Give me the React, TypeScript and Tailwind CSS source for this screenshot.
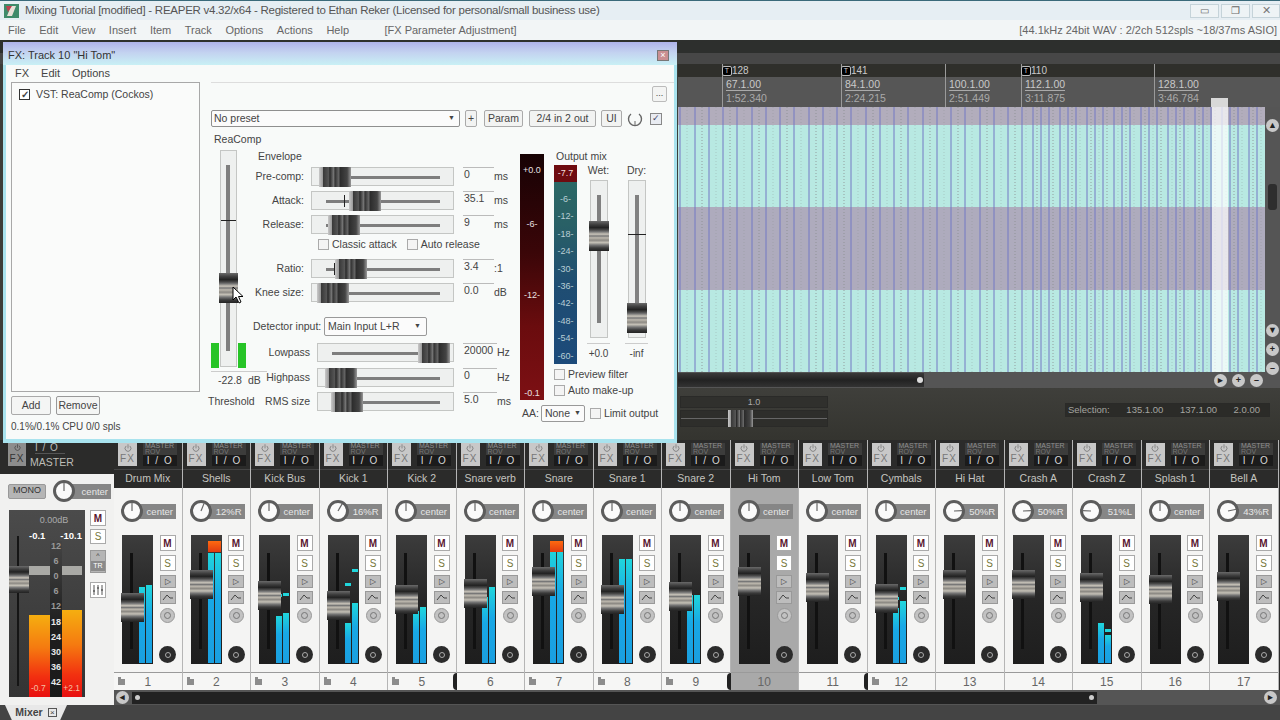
import React from "react";
import { Power } from "lucide-react";

const HCAP = "bg-[linear-gradient(90deg,#c9c9c9_0%,#9a9a9a_12%,#3a3a3a_14%,#555_30%,#2a2a2a_34%,#777_46%,#333_50%,#666_62%,#2c2c2c_66%,#444_88%,#999_100%)]";
const VCAP = "bg-[linear-gradient(180deg,#6a6a6a_0%,#3e3e3e_12%,#222_22%,#4a4a4a_30%,#777_36%,#c9c4ba_44%,#777_50%,#bdb8ae_56%,#8d8a84_64%,#c4c0b6_72%,#777_80%,#3a3a3a_90%,#222_100%)]";

function HSlider({ w, thumb, tick }: { w: number; thumb: number; tick?: number }) {
  return (
    <div className="relative h-[19px] shrink-0 border border-[#c4c6c4] bg-[#eef0ef]" style={{ width: w }}>
      <div className="absolute left-[14px] right-[13px] top-[8px] h-[3px] bg-[#7d7d7d]" />
      {tick !== undefined && <div className="absolute top-[3px] h-[12px] w-px bg-[#222]" style={{ left: tick }} />}
      <div className={`absolute -top-px h-[20px] w-[32px] ${HCAP}`} style={{ left: thumb }} />
    </div>
  );
}

function Row({ label, lw, sw, thumb, tick, val, unit, vw = 31 }: { label: string; lw: number; sw: number; thumb: number; tick?: number; val: string; unit: string; vw?: number }) {
  return (
    <div className="flex h-[19px] items-center">
      <div className="shrink-0 text-right" style={{ width: lw }}>{label}</div>
      <div className="shrink-0" style={{ width: 7 }} />
      <HSlider w={sw} thumb={thumb} tick={tick} />
      <div className="ml-[9px] h-[19px] shrink-0 border-t border-[#bbb] pl-px text-[10.5px] leading-[13px]" style={{ width: vw }}>{val}</div>
      <div className="whitespace-nowrap">{unit}</div>
    </div>
  );
}

function Check({ label, on }: { label: string; on?: boolean }) {
  return (
    <div className="flex items-center gap-[3px] whitespace-nowrap">
      <div className="flex h-[11px] w-[11px] items-center justify-center border border-[#aaa] bg-[#f4f4f4] text-[9px] leading-none">{on ? "✓" : ""}</div>
      <span>{label}</span>
    </div>
  );
}

function Btn({ children, w }: { children: React.ReactNode; w: number }) {
  return (
    <div className="flex h-[17px] shrink-0 items-center justify-center rounded-[2px] border border-[#aaa] bg-[#f2f3f2]" style={{ width: w }}>
      {children}
    </div>
  );
}

function VSlider({ cap, tick, h = 158 }: { cap: number; tick?: number; h?: number }) {
  return (
    <div className="relative mx-auto w-[18px] border border-[#c4c6c4] bg-[#eef0ef]" style={{ height: h }}>
      <div className="absolute bottom-[14px] left-[6px] top-[14px] w-[4px] bg-[#808080]" />
      {tick !== undefined && <div className="absolute -left-px h-px w-[18px] bg-[#222]" style={{ top: tick }} />}
      <div className={`absolute -left-[2px] h-[30px] w-[20px] ${VCAP}`} style={{ top: cap }} />
    </div>
  );
}

function FxWindow() {
  return (
    <div className="absolute left-[3px] top-[42px] flex h-[401px] w-[674px] flex-col bg-[#a9e3ee] text-[10.5px] text-[#444]">
      <div className="flex h-[23px] shrink-0 items-center justify-between bg-[linear-gradient(180deg,#aeb2ea_0%,#c3d2f0_45%,#c9f0f5_100%)] pl-[5px] pr-[8px] pt-[3px] text-[11px] text-[#333]">
        <span>FX: Track 10 "Hi Tom"</span>
        <div className="flex h-[11px] w-[12px] items-center justify-center border border-[#777] bg-[#c98f92] text-[9px] leading-none text-white">×</div>
      </div>
      <div className="mx-[3px] mb-[4px] flex flex-1 flex-col bg-[#f8faf9]">
        <div className="flex h-[17px] shrink-0 items-center gap-[12px] pl-[9px] text-[11px]">
          <span>FX</span><span>Edit</span><span>Options</span>
        </div>
        <div className="flex flex-1">
          <div className="ml-[5px] flex w-[189px] shrink-0 flex-col">
            <div className="h-[310px] border border-[#a8a8a8] bg-[#fafbfa] pl-[7px] pt-[4px]">
              <div className="flex items-center gap-[6px] text-[10.5px]">
                <div className="flex h-[11px] w-[11px] items-center justify-center border border-[#333] bg-white text-[10px] font-bold leading-none">✓</div>
                <span>VST: ReaComp (Cockos)</span>
              </div>
            </div>
            <div className="mt-[4px] flex gap-[5px]">
              <div className="flex h-[19px] w-[40px] items-center justify-center rounded-[2px] border border-[#aaa] bg-[#f4f5f4]">Add</div>
              <div className="flex h-[19px] w-[44px] items-center justify-center rounded-[2px] border border-[#999] bg-[#f4f5f4]">Remove</div>
            </div>
            <div className="mt-[4px] text-[10px]">0.1%/0.1% CPU 0/0 spls</div>
          </div>
          <div className="ml-[11px] flex min-w-0 flex-1 flex-col">
            <div className="relative flex h-[28px] shrink-0 justify-end border-t border-[#ddd] pr-[7px] pt-[3px]">
              <div className="flex h-[16px] w-[15px] items-center justify-center rounded-[2px] border border-[#bbb] bg-[#f3f4f3] text-[9px]">...</div>
            </div>
            <div className="flex h-[17px] shrink-0 items-center">
              <div className="flex h-[17px] w-[249px] items-center justify-between rounded-[2px] border border-[#8f8f8f] bg-[#fbfbfb] px-[2px] pr-[4px]">
                <span>No preset</span><span className="text-[7px]">▼</span>
              </div>
              <div className="ml-[5px]"><Btn w={12}>+</Btn></div>
              <div className="ml-[7px]"><Btn w={39}>Param</Btn></div>
              <div className="ml-[6px]"><Btn w={67}>2/4 in 2 out</Btn></div>
              <div className="ml-[5px]"><Btn w={21}>UI</Btn></div>
              <svg width="16" height="16" viewBox="0 0 16 16" className="ml-[5px]"><path d="M4 3 A6.5 6.5 0 1 0 12 3" fill="none" stroke="#666" strokeWidth="1.4" /><path d="M8 14 L8 10" stroke="#666" /></svg>
              <div className="ml-[7px] flex h-[12px] w-[12px] items-center justify-center border border-[#888] bg-[#e9ecf2] text-[9px] leading-none text-[#446]">✓</div>
            </div>
            <div className="h-[23px] shrink-0 pl-[3px] pt-[6px] leading-[13px]">ReaComp</div>
            <div className="flex min-h-0 flex-1">
              {/* threshold */}
              <div className="w-[39px] shrink-0">
                <div className="relative ml-[9px] h-[217px] w-[17px] border border-[#c4c6c4] bg-[#eef0ef]">
                  <div className="absolute left-[5px] top-[14px] h-[186px] w-[4px] bg-[#7f7f7f]" />
                  <div className="absolute left-0 top-[69px] h-px w-[15px] bg-[#222]" />
                  <div className="absolute -left-[10px] top-[192px] h-[25px] w-[8px] bg-[#27c427]" />
                  <div className="absolute -right-[10px] top-[192px] h-[25px] w-[8px] bg-[#27c427]" />
                  <div className={`absolute -left-[2px] top-[122px] h-[30px] w-[19px] ${VCAP}`} />
                  <svg width="14" height="19" viewBox="0 0 14 19" className="absolute left-[11px] top-[135px]">
                    <path d="M1 1 L1 14 L4 11 L7 17 L9 16 L6.5 10.5 L11 10.5 Z" fill="#fff" stroke="#000" strokeWidth="1" />
                  </svg>
                </div>
                <div className="relative mt-[4px] h-[14px] w-[56px] whitespace-nowrap border-t border-[#ccc] pl-[7px] pt-px leading-[14px]">-22.8<span className="ml-[6px]">dB</span></div>
                <div className="-ml-[3px] mt-[10px] leading-[13px]">Threshold</div>
              </div>
              {/* sliders */}
              <div className="w-[270px] shrink-0 pt-[17px]">
                <div className="relative -mt-[17px] h-[17px] pl-[8px] leading-[12px]">Envelope</div>
                <Row label="Pre-comp:" lw={54} sw={143} thumb={7} val="0" unit="ms" />
                <div className="mt-[5px]"><Row label="Attack:" lw={54} sw={143} thumb={37} tick={32} val="35.1" unit="ms" /></div>
                <div className="mt-[5px]"><Row label="Release:" lw={54} sw={143} thumb={16} val="9" unit="ms" /></div>
                <div className="ml-[68px] mt-[4px] flex h-[13px] gap-[10px]"><Check label="Classic attack" /><Check label="Auto release" /></div>
                <div className="mt-[8px]"><Row label="Ratio:" lw={54} sw={143} thumb={23} tick={22} val="3.4" unit=":1" /></div>
                <div className="mt-[5px]"><Row label="Knee size:" lw={54} sw={143} thumb={5} val="0.0" unit="dB" /></div>
                <div className="mt-[15px] flex h-[19px] items-center">
                  <span className="ml-[3px] w-[71px] whitespace-nowrap">Detector input:</span>
                  <div className="flex h-[19px] w-[103px] items-center justify-between rounded-[2px] border border-[#999] bg-[#fbfbfb] pl-[3px] pr-[5px]"><span>Main Input L+R</span><span className="text-[7px]">▼</span></div>
                </div>
                <div className="mt-[7px]"><Row label="Lowpass" lw={60} sw={137} thumb={100} val="20000" unit="Hz" vw={34} /></div>
                <div className="mt-[6px]"><Row label="Highpass" lw={60} sw={137} thumb={7} val="0" unit="Hz" vw={34} /></div>
                <div className="mt-[5px]"><Row label="RMS size" lw={60} sw={137} thumb={13} val="5.0" unit="ms" vw={34} /></div>
              </div>
              {/* meters + output */}
              <div className="flex w-[150px] shrink-0 flex-col">
                <div className="flex h-[250px]">
                  <div className="relative mt-[4px] h-[246px] w-[24px] shrink-0 bg-[linear-gradient(180deg,#170204_0%,#3a0608_40%,#6a0c0e_70%,#7d1014_100%)] text-center text-[9px] text-[#e8e0e0]">
                    <div className="absolute inset-x-0 top-[10px]">+0.0</div>
                    <div className="absolute inset-x-0 top-[64px]">-6-</div>
                    <div className="absolute inset-x-0 top-[135px]">-12-</div>
                    <div className="absolute inset-x-0 bottom-0">-0.1</div>
                  </div>
                  <div className="ml-[10px] flex-1">
                    <div className="h-[15px] pl-[2px] leading-[12px]">Output mix</div>
                    <div className="flex">
                      <div className="flex h-[199px] w-[23px] shrink-0 flex-col bg-[linear-gradient(180deg,#2d6b66_0%,#296066_30%,#1f4d72_60%,#1c4a7a_100%)] text-center text-[9px] leading-[17.4px] text-[#b8ced4]">
                        <div className="mb-[9px] h-[17px] bg-[#6e0b10] text-[#f3dede]">-7.7</div>
                        {["-6-", "-12-", "-18-", "-24-", "-30-", "-36-", "-42-", "-48-", "-54-", "-60-"].map((t) => <div key={t}>{t}</div>)}
                      </div>
                      <div className="ml-[10px] w-[23px] shrink-0 text-center">
                        <div className="h-[15px] leading-[10px]">Wet:</div>
                        <VSlider cap={40} />
                        <div className="mt-[5px] border-t border-[#ccc] pt-[2px] text-[10px]">+0.0</div>
                      </div>
                      <div className="ml-[15px] w-[23px] shrink-0 text-center">
                        <div className="h-[15px] leading-[10px]">Dry:</div>
                        <VSlider cap={122} tick={53} />
                        <div className="mt-[5px] border-t border-[#ccc] pt-[2px] text-[10px]">-inf</div>
                      </div>
                    </div>
                  </div>
                </div>
                <div className="relative h-[0px]">
                  <div className="absolute left-[34px] top-[-33px]"><Check label="Preview filter" /></div>
                  <div className="absolute left-[34px] top-[-17px]"><Check label="Auto make-up" /></div>
                </div>
                <div className="mt-[5px] flex items-center">
                  <span className="ml-[2px]">AA:</span>
                  <div className="ml-[2px] flex h-[17px] w-[44px] items-center justify-between rounded-[2px] border border-[#999] bg-[#fbfbfb] px-[3px]"><span>None</span><span className="text-[7px]">▼</span></div>
                  <div className="ml-[5px]"><Check label="Limit output" /></div>
                </div>
              </div>
            </div>
          </div>
        </div>
      </div>
    </div>
  );
}

const MARKS = [
  { x: 722, t: "128", a: "67.1.00", b: "1:52.340" },
  { x: 841, t: "141", a: "84.1.00", b: "2:24.215" },
  { x: 945, t: "", a: "100.1.00", b: "2:51.449" },
  { x: 1021, t: "110", a: "112.1.00", b: "3:11.875" },
  { x: 1154, t: "", a: "128.1.00", b: "3:46.784" },
];

function LaneLines() {
  const lines: React.ReactNode[] = [];
  let x = 2;
  let i = 0;
  while (x < 587) {
    const dense = x > 330;
    lines.push(<line key={`p${i}`} x1={x} x2={x} y1={0} y2={267} stroke="#7378c4" strokeWidth="1" />);
    const dx = x + (dense ? 4 : 7);
    lines.push(<line key={`d${i}`} x1={dx} x2={dx} y1={0} y2={267} stroke="#8a8f8f" strokeWidth="1" strokeDasharray="1 2" opacity={i % 2 ? 0.8 : 0.35} />);
    x += dense ? (i % 3 === 0 ? 11 : 8) : 14 + (i % 4 === 0 ? 1 : 0);
    i++;
  }
  return (
    <svg className="absolute inset-0" width="587" height="267" viewBox="0 0 587 267">
      {lines}
    </svg>
  );
}

function RoundBtn({ c }: { c: string }) {
  return <div className="flex h-[13px] w-[13px] items-center justify-center rounded-full bg-[#c8c8c8] text-[9px] font-bold leading-none text-[#222]">{c}</div>;
}

function Arrange() {
  return (
    <div className="flex h-[400px] shrink-0 flex-col bg-[#3d3d39]">
      <div className="h-[13px] shrink-0 bg-[#2d2f2d]" />
      <div className="h-[11px] shrink-0 bg-[#474747]" />
      <div className="flex min-h-0 flex-1">
        <div className="w-[678px] shrink-0" />
        <div className="flex min-w-0 flex-1 flex-col">
          <div className="relative h-[43px] shrink-0 bg-[linear-gradient(180deg,#2f2f2b_0%,#2f2f2b_30%,#565656_30%,#565656_100%)]">
            {MARKS.map((m) => (
              <div key={m.x} className="absolute top-0 h-[43px] border-l border-[#9a9a9a] pl-[3px] text-[10.5px] leading-[12px] text-[#c9c9c9]" style={{ left: m.x - 678 }}>
                <div className="flex h-[13px] items-center">
                  {m.t && <span className="-ml-[4px] flex h-[10px] w-[10px] items-center justify-center rounded-[2px] border border-[#bbb] bg-black text-[7px] leading-none">T</span>}
                  <span className="text-[10px]">{m.t}</span>
                </div>
                <div className="w-fit border-b border-[#aaa] pt-px">{m.a}</div>
                <div className="pt-px text-[#aaa]">{m.b}</div>
              </div>
            ))}
            <div className="absolute left-[533px] top-[34px] h-[9px] w-[17px] bg-[#d8d8d8]" />
          </div>
          <div className="flex min-h-0">
            <div className="relative h-[265px] w-[587px] shrink-0 overflow-hidden">
              <div className="h-[18px] bg-[#b2adbc]" />
              <div className="h-[82px] bg-[#b8e9e2]" />
              <div className="h-[83px] bg-[#aeabbd]" />
              <div className="h-[82px] bg-[#b8e9e2]" />
              <LaneLines />
              <div className="absolute bottom-0 left-[534px] top-0 w-[16px] bg-white/70" />
            </div>
            <div className="relative flex h-[265px] flex-1 flex-col items-center bg-[#555]">
              <div className="mt-[12px]"><RoundBtn c="▲" /></div>
              <div className="mt-[52px] h-[26px] w-[9px] rounded-[3px] bg-[#2e2e2e]" />
              <div className="-mb-[3px] mt-auto flex flex-col gap-[6px]"><RoundBtn c="▼" /><RoundBtn c="+" /><RoundBtn c="–" /></div>
            </div>
          </div>
          <div className="flex h-[16px] shrink-0 items-center bg-[#555]">
            <div className="flex h-[14px] w-[246px] items-center justify-end bg-[linear-gradient(180deg,#3a3a3a,#222_50%,#333)] pr-[1px]"><div className="h-[6px] w-[6px] rounded-full bg-[#ddd]" /></div>
            <div className="ml-[290px] flex gap-[5px]"><RoundBtn c="▸" /><RoundBtn c="+" /><RoundBtn c="–" /></div>
          </div>
          <div className="flex min-h-0 flex-1 bg-[linear-gradient(180deg,#3f3f3b,#34342f)]">
            <div className="ml-[2px] mt-[8px] w-[148px]">
              <div className="h-[12px] border border-[#2a2a28] bg-[#30302d] text-center text-[9px] leading-[10px] text-[#aaa]">1.0</div>
              <div className="relative mt-[2px] h-[17px] border border-[#2a2a28] bg-[#2e2e2b]">
                <div className="absolute inset-x-0 top-[7px] h-px bg-[#666]" />
                <div className={`absolute left-[47px] -top-px h-[17px] w-[25px] ${HCAP}`} />
              </div>
            </div>
            <div className="ml-auto mr-[10px] mt-[15px] flex h-[14px] w-[205px] items-center justify-between border border-[#2a2a28] bg-[#2b2b28] px-[2px] text-[9.5px] text-[#a5a5a0]">
              <span>Selection:</span><span>135.1.00</span><span>137.1.00</span><span className="pr-[7px]">2.0.00</span>
            </div>
          </div>
        </div>
      </div>
    </div>
  );
}

type Ch = { n: number; name: string; pan: string; a: number; cap: number; l: number; r: number; peakL?: number; peakR?: number; red?: boolean; folder?: boolean; end?: boolean; sel?: boolean };

const CH: Ch[] = [
  { n: 1, name: "Drum Mix", pan: "center", a: 0, cap: 58, l: 76, r: 78, folder: true },
  { n: 2, name: "Shells", pan: "12%R", a: 22, cap: 35, l: 110, r: 110, red: true, folder: true },
  { n: 3, name: "Kick Bus", pan: "center", a: 0, cap: 46, l: 47, r: 50, peakL: 67, peakR: 68, folder: true },
  { n: 4, name: "Kick 1", pan: "16%R", a: 30, cap: 56, l: 40, r: 60, peakL: 78, peakR: 92, folder: true },
  { n: 5, name: "Kick 2", pan: "center", a: 0, cap: 50, l: 52, r: 56, folder: true, end: true },
  { n: 6, name: "Snare verb", pan: "center", a: 0, cap: 44, l: 66, r: 76 },
  { n: 7, name: "Snare", pan: "center", a: 0, cap: 32, l: 114, r: 114, red: true, folder: true },
  { n: 8, name: "Snare 1", pan: "center", a: 0, cap: 50, l: 104, r: 104, folder: true },
  { n: 9, name: "Snare 2", pan: "center", a: 0, cap: 47, l: 68, r: 68, folder: true, end: true },
  { n: 10, name: "Hi Tom", pan: "center", a: 0, cap: 32, l: 0, r: 0, sel: true },
  { n: 11, name: "Low Tom", pan: "center", a: 0, cap: 38, l: 0, r: 0, end: true },
  { n: 12, name: "Cymbals", pan: "center", a: 0, cap: 49, l: 55, r: 62, peakL: 64, peakR: 74, folder: true },
  { n: 13, name: "Hi Hat", pan: "50%R", a: 88, cap: 35, l: 0, r: 0 },
  { n: 14, name: "Crash A", pan: "50%R", a: 88, cap: 35, l: 0, r: 0 },
  { n: 15, name: "Crash Z", pan: "51%L", a: -88, cap: 38, l: 40, r: 28, peakR: 32 },
  { n: 16, name: "Splash 1", pan: "center", a: 0, cap: 40, l: 0, r: 0 },
  { n: 17, name: "Bell A", pan: "43%R", a: 78, cap: 37, l: 0, r: 0 },
];

function Knob({ a, size = 22 }: { a: number; size?: number }) {
  const r = (a * Math.PI) / 180;
  return (
    <svg width={size} height={size} viewBox="0 0 22 22" className="relative z-10 shrink-0">
      <circle cx="11" cy="11" r="9.5" fill="#fafafa" stroke="#5c5c5c" strokeWidth="3" />
      <line x1="11" y1="11" x2={11 + 8.5 * Math.sin(r)} y2={11 - 8.5 * Math.cos(r)} stroke="#666" strokeWidth="1.2" />
    </svg>
  );
}

function Pan({ pan, a }: { pan: string; a: number }) {
  return (
    <div className="flex items-center">
      <Knob a={a} />
      <div className="-ml-[6px] h-[15px] w-[39px] bg-[#868686] pr-[3px] text-right text-[9.5px] leading-[15px] text-[#e6e6e6]">{pan}</div>
    </div>
  );
}

function ChannelHeader({ name }: { name: string }) {
  return (
    <div className="h-[48px] shrink-0 bg-[#2b2b2a]">
      <div className="flex h-[29px] gap-[6px] px-[4px] pt-[3px]">
        <div className="flex h-[23px] w-[19px] shrink-0 flex-col items-center bg-[#c8c8c8] text-[#666]">
          <Power size={8} strokeWidth={2} className="mt-[1px]" />
          <span className="mt-[1px] text-[10px] leading-[11px] tracking-[1px] text-[#777]">FX</span>
        </div>
        <div className="flex h-[23px] w-[34px] shrink-0 flex-col bg-[#3c3c3b]">
          <span className="pl-[2px] text-[7px] leading-[6px] text-[#8f8f8f]">MASTER</span>
          <span className="pl-[2px] text-[7px] leading-[6px] text-[#777]">ROV</span>
          <span className="mt-auto w-full bg-[#1b1b1b] text-center text-[10px] leading-[11px] tracking-[1.5px] text-[#d8d8d8]">I / O</span>
        </div>
      </div>
      <div className="flex h-[19px] items-center justify-center border-t border-[#444] text-[10.5px] text-[#c5c5c0]">{name}</div>
    </div>
  );
}

function Channel({ c }: { c: Ch }) {
  const barTop = c.red ? "bg-[linear-gradient(180deg,#ff6a10,#e03a10)]" : "";
  return (
    <div className="flex w-[68.5px] shrink-0 flex-col border-r border-[#b5b5b5]">
      <ChannelHeader name={c.name} />
      <div className={`flex flex-1 flex-col pl-[7px] pt-[12px] ${c.sel ? "bg-[#a9a9a9]" : "bg-[#f4f4f3]"}`}>
        <Pan pan={c.pan} a={c.a} />
        <div className="mt-[13px] flex">
          <div className="relative ml-px h-[129px] w-[31px] shrink-0 bg-[linear-gradient(180deg,#3c3c3c,#262626_50%,#1e1e1e)]">
            <div className="absolute left-[8px] top-[18px] h-[96px] w-[3px] bg-[#111]" />
            {c.l > 0 && <div className="absolute bottom-[1px] left-[17px] w-[6px] bg-[linear-gradient(0deg,#1a9fe0,#18a8e6_60%,#20d6dc)]" style={{ height: c.l }} />}
            {c.r > 0 && <div className="absolute bottom-[1px] left-[24px] w-[6px] bg-[linear-gradient(0deg,#1a9fe0,#18a8e6_60%,#20d6dc)]" style={{ height: c.r }} />}
            {c.red && <div className={`absolute left-[17px] top-[6px] h-[11px] w-[13px] ${barTop}`} />}
            {c.peakL !== undefined && <div className="absolute left-[17px] h-[3px] w-[6px] bg-[#20d6dc]" style={{ bottom: c.peakL }} />}
            {c.peakR !== undefined && <div className="absolute left-[24px] h-[3px] w-[6px] bg-[#20d6dc]" style={{ bottom: c.peakR }} />}
            <div className={`absolute -left-px h-[29px] w-[23px] ${VCAP}`} style={{ top: c.cap }} />
          </div>
          <div className="ml-[6px] flex h-[129px] w-[17px] shrink-0 flex-col items-center">
            <div className="flex h-[16px] w-[16px] items-center justify-center border border-[#aaa] bg-white text-[10px] font-bold text-[#5a1530]">M</div>
            <div className="mt-[4px] flex h-[16px] w-[16px] items-center justify-center border border-[#aaa] bg-white text-[10px] text-[#77773a]">S</div>
            <div className="mt-[4px] flex h-[13px] w-[16px] items-center justify-center border border-[#999] bg-[#bdbdbd] text-[8px] leading-none text-[#444]">▷</div>
            <div className="mt-[3px] flex h-[13px] w-[16px] items-center justify-center border border-[#999] bg-[#bdbdbd]">
              <svg width="12" height="9" viewBox="0 0 12 9"><path d="M1 7 L5 2 L8 5 L11 5" fill="none" stroke="#444" strokeWidth="1" /></svg>
            </div>
            <div className="mt-[4px] flex h-[15px] w-[15px] items-center justify-center rounded-full border border-[#999] bg-[#c2c2c2]">
              <div className="h-[7px] w-[7px] rounded-full border border-[#777]" />
            </div>
            <div className="mb-px mt-auto flex h-[17px] w-[17px] items-center justify-center rounded-full bg-[#2b2b2b]">
              <div className="h-[6px] w-[6px] rounded-full border border-[#aaa]" />
            </div>
          </div>
        </div>
        <div className="flex-1" />
      </div>
      <div className={`relative flex h-[18px] shrink-0 items-center justify-center border-t border-[#9a9a9a] text-[12px] text-[#666] ${c.sel ? "bg-[#a9a9a9]" : "bg-[#f6f6f5]"}`}>
        {c.folder && (
          <svg width="9" height="10" viewBox="0 0 9 10" className="absolute left-[3px] top-[3px]"><path d="M1 1 H4 V3 H8 V9 H1 Z" fill="#8c8c8c" /></svg>
        )}
        <span>{c.n}</span>
        {c.end && <div className="absolute -right-px top-0 h-[17px] w-[4px] rounded-l-full bg-[#222]" />}
      </div>
    </div>
  );
}

function Master() {
  const scale = ["12", "6", "0", "6", "12", "18", "24", "30", "36", "42"];
  return (
    <div className="flex w-[114px] shrink-0 flex-col">
      <div className="flex h-[34px] shrink-0 bg-[#2b2b2a] pl-[8px] pt-[3px]">
        <div className="flex h-[23px] w-[18px] flex-col items-center bg-[#8d8d8d] text-[#333]">
          <Power size={7} strokeWidth={2} className="mt-[1px]" />
          <span className="mt-[2px] text-[10px] leading-[12px] tracking-[1px]">FX</span>
        </div>
        <div className="ml-[4px] flex flex-col">
          <span className="ml-[5px] w-fit border-b border-[#555] pr-[6px] text-[10px] leading-[10px] tracking-[1px] text-[#bbb]">I / O</span>
          <span className="mt-[2px] text-[10.5px] leading-[13px] text-[#bdbdb8]">MASTER</span>
        </div>
      </div>
      <div className="flex-1 bg-[#f1f1f0] pl-[8px] pt-[7px]">
        <div className="flex h-[20px] items-center">
          <div className="flex h-[15px] w-[38px] items-center justify-center rounded-[2px] border border-[#999] bg-[#b5b5b5] text-[9px] text-[#333]">MONO</div>
          <div className="ml-[7px] flex items-center">
            <Knob a={0} />
            <div className="-ml-[6px] h-[15px] w-[42px] bg-[#868686] pr-[3px] text-right text-[9.5px] leading-[15px] text-[#e6e6e6]">center</div>
          </div>
        </div>
        <div className="mt-[9px] flex">
          <div className="relative ml-px h-[187px] w-[76px] shrink-0 bg-[linear-gradient(180deg,#4b4b4b,#343434)] text-[#ddd]">
            <div className="absolute inset-x-0 top-[4px] ml-[14px] text-center text-[9px] text-[#aaa]">0.00dB</div>
            <div className="absolute left-[20px] right-0 top-[19px] flex justify-between pr-[3px] text-[9.5px] font-bold text-white"><span>-0.1</span><span>-10.1</span></div>
            <div className="absolute left-[8px] top-[26px] h-[150px] w-[2px] bg-[#151515]" />
            <div className="absolute left-[20px] top-[56px] h-[9px] w-[53px] bg-[#a9a9a5]" />
            <div className={`absolute left-0 top-[56px] h-[27px] w-[20px] ${VCAP}`} />
            <div className="absolute bottom-0 left-[20px] top-[105px] w-[21px] bg-[linear-gradient(180deg,#f5ae10,#f57a10_40%,#f23010_75%,#e81010)]" />
            <div className="absolute bottom-0 right-[3px] top-[100px] w-[20px] bg-[linear-gradient(180deg,#f5ae10,#f57a10_40%,#f23010_75%,#e81010)]" />
            <div className="absolute bottom-0 left-[41px] top-[31px] flex w-[12px] flex-col bg-[linear-gradient(180deg,#444,#1e1e1e_55%,#1a1a1a)] pb-[9px] text-center text-[9px] font-bold leading-[11px] text-[#e8e8e8]">
              <div className="flex flex-1 flex-col justify-between">
                {scale.map((s, i) => <span key={i} className={i < 5 ? "text-[#999]" : ""}>{s}</span>)}
              </div>
            </div>
            <div className="absolute bottom-[2px] left-[22px] text-[8.5px] text-[#f4c0a0]">-0.7</div>
            <div className="absolute bottom-[2px] right-[5px] text-[8.5px] text-[#f4c0a0]">+2.1</div>
          </div>
          <div className="ml-[5px] flex w-[16px] shrink-0 flex-col">
            <div className="flex h-[16px] w-[16px] items-center justify-center border border-[#aaa] bg-white text-[10px] font-bold text-[#5a1530]">M</div>
            <div className="mt-[3px] flex h-[15px] w-[16px] items-center justify-center border border-[#aaa] bg-white text-[10px] text-[#77773a]">S</div>
            <div className="mt-[6px] flex h-[23px] w-[16px] flex-col items-center border border-[#999] bg-[#b5b5b5] text-[7px] leading-[10px] text-[#333]">
              <span>^</span><span className="w-full bg-[#8a8a8a] text-center text-white">TR</span>
            </div>
            <div className="mt-[9px] flex h-[16px] w-[16px] items-center justify-center border border-[#aaa] bg-white">
              <svg width="12" height="12" viewBox="0 0 12 12"><path d="M2 1 V11 M6 1 V11 M10 1 V11" stroke="#555" /><path d="M1 7 H3 M5 4 H7 M9 6 H11" stroke="#333" /></svg>
            </div>
          </div>
        </div>
      </div>
    </div>
  );
}

function Mixer() {
  return (
    <div className="flex h-[265px] shrink-0 bg-[#2b2b2a]">
      <Master />
      <div className="flex min-w-0 flex-1 flex-col">
        <div className="flex h-[250px] overflow-hidden">
          {CH.map((c) => <Channel key={c.n} c={c} />)}
        </div>
        <div className="flex h-[15px] shrink-0 items-center bg-[#555] pl-[2px] pr-[3px]">
          <RoundBtn c="◂" />
          <div className="ml-[3px] flex h-[12px] w-[965px] items-center bg-[#222] pl-[3px] pr-[3px]"><div className="h-[5px] w-[5px] rounded-full bg-[#ccc]" /><div className="ml-auto h-[5px] w-[5px] rounded-full bg-[#ccc]" /></div>
          <div className="ml-auto"><RoundBtn c="▸" /></div>
        </div>
      </div>
    </div>
  );
}

export default function App() {
  return (
    <div className="relative flex h-[720px] w-[1280px] flex-col overflow-hidden bg-[#3d3d39] font-['Liberation_Sans',sans-serif] text-[11px]">
      <div className="flex h-[20px] shrink-0 items-center border-t border-[#3a6a7a] bg-[#e6eef3] pl-[3px] text-[#444]">
        <svg width="17" height="16" viewBox="0 0 17 16" className="shrink-0"><rect x="1" y="1" width="15" height="14" fill="#3f8a6a" /><path d="M4 13 L8 3 L13 3 L9 13 Z" fill="#e8e0d8" /><path d="M3 3 H9 L5 9 Z" fill="#c04050" /></svg>
        <span className="ml-[5px] text-[11.5px] tracking-[-0.26px] text-[#555]">Mixing Tutorial [modified] - REAPER v4.32/x64 - Registered to Ethan Reker (Licensed for personal/small business use)</span>
        <div className="ml-auto flex">
          <div className="flex h-[14px] w-[29px] items-center justify-center border border-[#c5d3d9] bg-[#eef3f5] text-[10px] text-[#666]">▭</div>
          <div className="ml-[2px] flex h-[14px] w-[29px] items-center justify-center border border-[#c5d3d9] bg-[#eef3f5] text-[10px] text-[#666]">❐</div>
          <div className="ml-[2px] flex h-[14px] w-[28px] items-center justify-center border border-[#c5d3d9] bg-[#eef3f5] text-[11px] text-[#777]">✕</div>
        </div>
      </div>
      <div className="flex h-[20px] shrink-0 items-center gap-[13.5px] bg-[#f2f5f6] pl-[8px] pr-[3px] text-[11px] text-[#666]">
        <span>File</span><span>Edit</span><span>View</span><span>Insert</span><span>Item</span><span>Track</span><span>Options</span><span>Actions</span><span>Help</span>
        <span className="ml-[22px]">[FX Parameter Adjustment]</span>
        <span className="ml-auto text-[#666]">[44.1kHz 24bit WAV : 2/2ch 512spls ~18/37ms ASIO]</span>
      </div>
      <Arrange />
      <Mixer />
      <div className="flex h-[15px] flex-1 items-start bg-[#444] pl-[5px]">
        <div className="flex h-[15px] w-[62px] items-center justify-center gap-[5px] bg-[#e8e8e8] text-[10.5px] font-bold text-[#444] [clip-path:polygon(0_0,100%_0,89%_100%,11%_100%)]">
          <span>Mixer</span><span className="flex h-[9px] w-[9px] items-center justify-center border border-[#555] text-[8px] font-normal leading-none">×</span>
        </div>
      </div>
      <FxWindow />
    </div>
  );
}
